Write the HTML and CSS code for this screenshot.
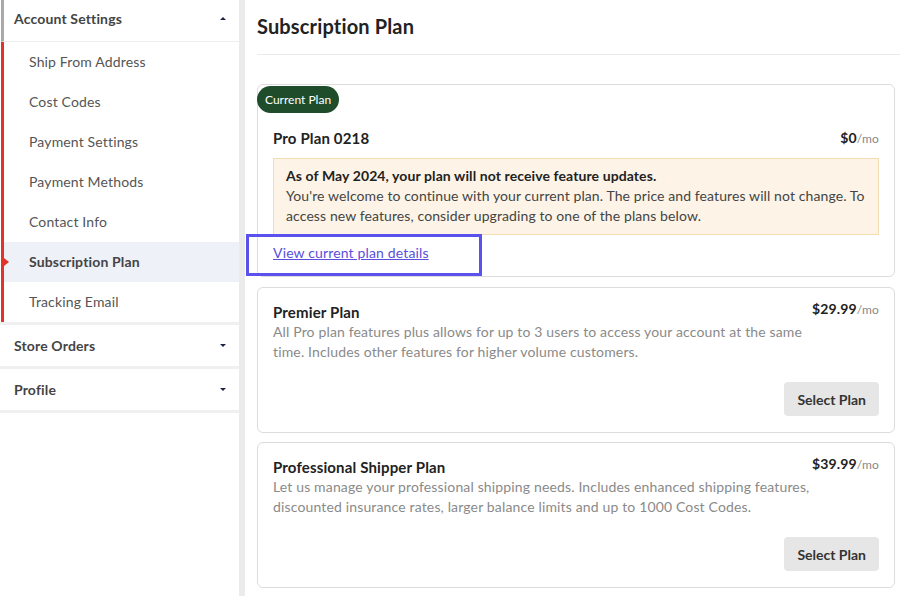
FILE: index.html
```html
<!DOCTYPE html>
<html lang="en">
<head>
    <meta charset="UTF-8">
    <meta name="viewport" content="width=device-width, initial-scale=1.0">
    <title>Subscription Plan</title>
    <link rel="stylesheet" href="styles.css">
</head>
<body>
    <aside class="sidebar">
        <div class="nav-group open">
            <div class="nav-head">Account Settings <span class="caret up"></span></div>
            <ul class="sub-nav">
                <li>Ship From Address</li>
                <li>Cost Codes</li>
                <li>Payment Settings</li>
                <li>Payment Methods</li>
                <li>Contact Info</li>
                <li class="active">Subscription Plan</li>
                <li>Tracking Email</li>
            </ul>
        </div>
        <div class="nav-group">
            <div class="nav-head">Store Orders <span class="caret"></span></div>
        </div>
        <div class="nav-group">
            <div class="nav-head">Profile <span class="caret"></span></div>
        </div>
    </aside>

    <main class="content">
        <h1 class="page-title">Subscription Plan</h1>

        <section class="plan-card current">
            <span class="badge">Current Plan</span>
            <div class="plan-head">
                <h2>Pro Plan 0218</h2>
                <div class="price">$0<span>/mo</span></div>
            </div>
            <div class="notice">
                <strong>As of May 2024, your plan will not receive feature updates.</strong><br>
                You're welcome to continue with your current plan. The price and features will not change. To access new features, consider upgrading to one of the plans below.
            </div>
            <div class="details-link">
                <a href="#">View current plan details</a>
                <span class="highlight"></span>
            </div>
        </section>

        <section class="plan-card">
            <div class="plan-head">
                <h2>Premier Plan</h2>
                <div class="price">$29.99<span>/mo</span></div>
            </div>
            <p class="plan-desc">All Pro plan features plus allows for up to 3 users to access your account at the same time. Includes other features for higher volume customers.</p>
            <div class="plan-actions"><button>Select Plan</button></div>
        </section>

        <section class="plan-card">
            <div class="plan-head">
                <h2>Professional Shipper Plan</h2>
                <div class="price">$39.99<span>/mo</span></div>
            </div>
            <p class="plan-desc">Let us manage your professional shipping needs. Includes enhanced shipping features, discounted insurance rates, larger balance limits and up to 1000 Cost Codes.</p>
            <div class="plan-actions"><button>Select Plan</button></div>
        </section>
    </main>
</body>
</html>
```

FILE: styles.css
```css
body {
    margin: 0;
    display: flex;
    min-height: 596px;
    font-family: Lato, "Open Sans", sans-serif;
    font-size: 14px;
    letter-spacing: 0.15px;
    color: #333;
    background: #fff;
}

/* sidebar */
.sidebar {
    width: 239px;
    flex-shrink: 0;
    border-right: 6px solid #ebebeb;
    background: #fff;
}
.nav-group {
    border-bottom: 3px solid #f0f0f0;
}
.nav-head {
    display: flex;
    align-items: center;
    justify-content: space-between;
    height: 41px;
    padding: 0 13px 0 14px;
    font-weight: 700;
    color: #444;
}
.nav-group.open .nav-head {
    box-sizing: border-box;
    height: 42px;
    padding-bottom: 4px;
    border-left: 3px solid #a9a9a9;
    margin-left: 1px;
    padding-left: 10px;
    border-bottom: 1px solid #eee;
}
.caret {
    width: 0;
    height: 0;
    border-left: 3px solid transparent;
    border-right: 3px solid transparent;
    border-top: 3px solid #1b2444;
}
.caret.up {
    border-top: none;
    border-bottom: 3px solid #1b2444;
}
.sub-nav {
    list-style: none;
    margin: 0 0 0 1px;
    padding: 0;
    border-left: 3px solid #e0342b;
}
.sub-nav li {
    position: relative;
    height: 40px;
    line-height: 40px;
    padding-left: 25px;
    color: #555;
}
.sub-nav li.active {
    background: #eef1f7;
    font-weight: 700;
    color: #444;
}
.sub-nav li.active::before {
    content: "";
    position: absolute;
    left: 0;
    top: 16px;
    border-top: 4px solid transparent;
    border-bottom: 4px solid transparent;
    border-left: 5px solid #e0342b;
}

/* main */
.content {
    flex: 1;
    padding: 0 5px 0 12px;
}
.page-title {
    margin: 0 -5px 0 0;
    padding: 12px 0 14px;
    line-height: 28px;
    font-size: 20px;
    font-weight: 700;
    color: #222;
    border-bottom: 1px solid #eaeaea;
}
.plan-card {
    border: 1px solid #dcdcdc;
    border-radius: 6px;
    padding: 14px 15px 16px;
    margin-bottom: 9px;
}
.plan-card.current {
    margin-top: 29px;
    margin-bottom: 10px;
    padding: 0 15px 13px;
}
.badge {
    display: inline-block;
    margin: 1px 0 0 -16px;
    height: 27px;
    line-height: 27px;
    padding: 0 8px;
    border-radius: 14px;
    background: #1f4d2c;
    color: #fff;
    font-size: 12px;
    letter-spacing: 0;
}
.current .plan-head {
    margin-top: 15px;
}
.plan-head {
    display: flex;
    justify-content: space-between;
    align-items: flex-start;
}
.plan-head h2 {
    margin: 0;
    font-size: 15px;
    line-height: 20px;
    font-weight: 700;
    color: #222;
}
.price {
    font-size: 14px;
    font-weight: 700;
    color: #222;
    line-height: 14px;
}
.current .price {
    line-height: 20px;
}
.price span {
    font-size: 12px;
    font-weight: 400;
    color: #888;
}
.notice {
    margin-top: 9px;
    padding: 7px 10px 8px 12px;
    background: #fdf4e7;
    border: 1px solid #f6deb4;
    line-height: 20px;
    letter-spacing: 0.1px;
    color: #444;
}
.notice strong {
    color: #222;
}
.details-link {
    position: relative;
    margin-top: 8px;
    line-height: 20px;
}
.details-link a {
    color: #5a4fdc;
}
.highlight {
    position: absolute;
    left: -27px;
    top: -9px;
    width: 236px;
    height: 42px;
    box-sizing: border-box;
    border: 3px solid #5b52ee;
}
.plan-desc {
    max-width: 550px;
    margin: 0;
    line-height: 20px;
    color: #8a8a8a;
}
.plan-actions {
    display: flex;
    justify-content: flex-end;
    margin-top: 20px;
}
.plan-actions button {
    height: 34px;
    padding: 0 13px;
    border: none;
    border-radius: 4px;
    background: #e6e6e6;
    font-family: inherit;
    font-size: 14px;
    font-weight: 700;
    color: #333;
}
```
